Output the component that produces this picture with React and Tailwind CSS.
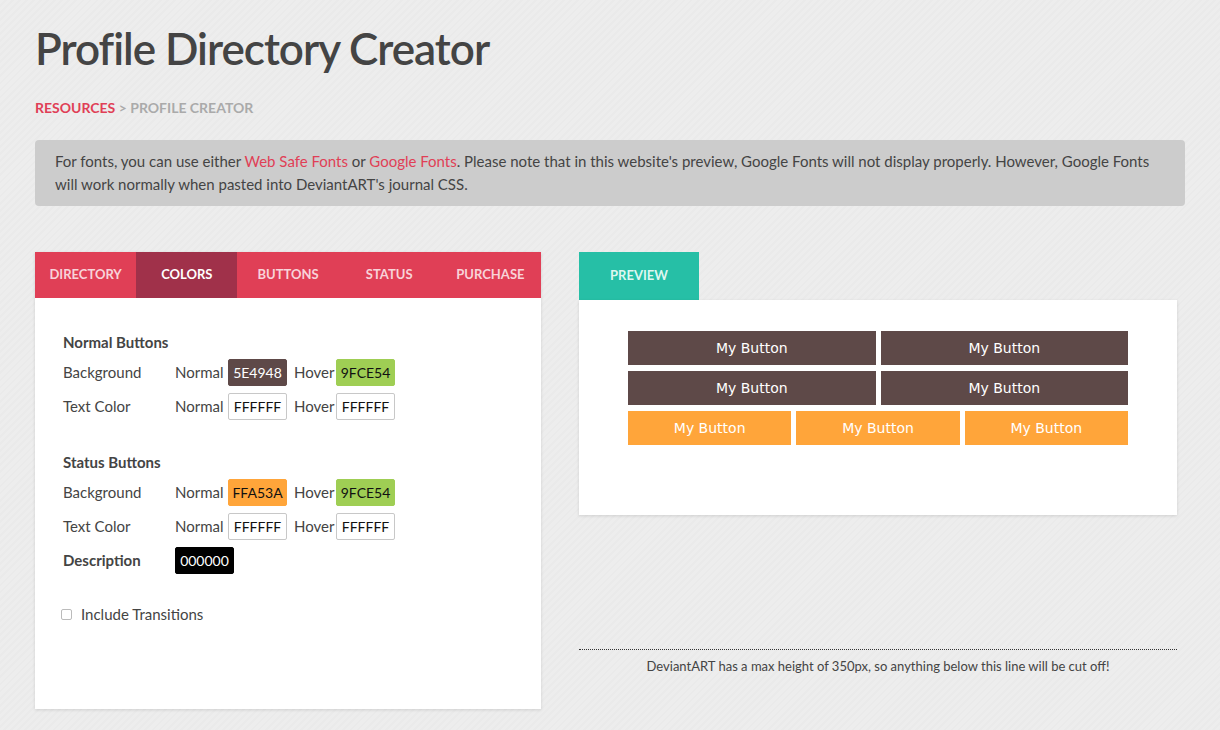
import { useState } from 'react';

const tabs = ['Directory', 'Colors', 'Buttons', 'Status', 'Purchase'];

function Swatch({ value, bg, fg, border }) {
  return (
    <span
      className={`inline-flex items-center justify-center w-[59px] h-[27px] rounded-[2px] text-[14px] border ${bg} ${fg} ${border}`}
    >
      {value}
    </span>
  );
}

function ColorRow({ label, normal, hover }) {
  return (
    <div className="flex items-center h-[34px]">
      <span className="w-[112px]">{label}</span>
      <span className="w-[53px]">Normal</span>
      <Swatch {...normal} />
      <span className="w-[49px] pl-[7px]">Hover</span>
      <Swatch {...hover} />
    </div>
  );
}

const white = { value: 'FFFFFF', bg: 'bg-white', fg: 'text-[#111]', border: 'border-[#c8c8c8]' };
const green = { value: '9FCE54', bg: 'bg-[#9fce54]', fg: 'text-[#111]', border: 'border-[#9fce54]' };

export default function App() {
  const [active] = useState('Colors');
  const [transitions, setTransitions] = useState(false);

  return (
    <div className="min-h-[730px] bg-[repeating-linear-gradient(135deg,#ededed_0px,#ededed_3px,#eaeaea_3px,#eaeaea_5px)] font-['Lato',sans-serif] text-[#444]">
      <div className="w-[1150px] ml-[35px] pt-[20px]">
        <h1 className="text-[44px] leading-[56px] font-semibold tracking-[-1px] text-[#444]">Profile Directory Creator</h1>

        <div className="mt-[23px] text-[14px] font-bold uppercase leading-[18px]">
          <a className="text-[#e03f56]">Resources</a>
          <span className="text-[#aaa]"> &gt; Profile Creator</span>
        </div>

        {/* note box */}
        <p className="mt-[23px] bg-[#cccccc] rounded-[4px] px-[20px] py-[10px] text-[15px] leading-[23px] text-[#444]">
          For fonts, you can use either <a className="text-[#e03f56]">Web Safe Fonts</a> or{' '}
          <a className="text-[#e03f56]">Google Fonts</a>. Please note that in this website's preview, Google Fonts will not
          display properly. However, Google Fonts will work normally when pasted into DeviantART's journal CSS.
        </p>

        <div className="flex gap-[38px] mt-[46px]">
          {/* settings panel */}
          <div className="w-[506px] h-[457px] bg-white shadow-[0_1px_3px_rgba(0,0,0,0.12)]">
            <div className="flex h-[46px] bg-[#e03f56]">
              {tabs.map(t => (
                <div
                  key={t}
                  className={`flex-1 flex items-center justify-center text-[13px] font-bold uppercase ${
                    t === active ? 'bg-[#a0314a] text-white' : 'text-[#f8d3d9]'
                  }`}
                >
                  {t}
                </div>
              ))}
            </div>

            <div className="pl-[28px] pt-[34px] text-[15px]">
              <div className="font-bold h-[20px] leading-[20px] mb-[3px]">Normal Buttons</div>
              <ColorRow
                label="Background"
                normal={{ value: '5E4948', bg: 'bg-[#5e4948]', fg: 'text-white', border: 'border-[#5e4948]' }}
                hover={green}
              />
              <ColorRow label="Text Color" normal={white} hover={white} />

              <div className="font-bold h-[20px] leading-[20px] mt-[29px] mb-[3px]">Status Buttons</div>
              <ColorRow
                label="Background"
                normal={{ value: 'FFA53A', bg: 'bg-[#ffa53a]', fg: 'text-[#111]', border: 'border-[#ffa53a]' }}
                hover={green}
              />
              <ColorRow label="Text Color" normal={white} hover={white} />
              <div className="flex items-center h-[34px]">
                <span className="w-[112px] font-bold">Description</span>
                <Swatch value="000000" bg="bg-black" fg="text-white" border="border-black" />
              </div>

              <label className="flex items-center mt-[27px] h-[20px] -ml-[2px] cursor-pointer">
                <span
                  onClick={() => setTransitions(v => !v)}
                  className="w-[11px] h-[11px] border border-[#bbb] rounded-[2px] bg-white mr-[9px]"
                />
                <span>Include Transitions</span>
              </label>
            </div>
          </div>

          {/* preview */}
          <div className="w-[598px]">
            <div className="w-[120px] h-[48px] bg-[#26bfa6] flex items-center justify-center text-[13px] font-bold uppercase text-[#dff7f1]">
              Preview
            </div>
            <div className="h-[215px] bg-white shadow-[0_1px_3px_rgba(0,0,0,0.12)] pt-[31px]">
              <div className="w-[500px] mx-auto flex flex-col gap-[6px] font-['DejaVu_Sans',sans-serif] text-[14px] text-white">
                <div className="grid grid-cols-2 gap-[5px]">
                  <div className="h-[34px] bg-[#5e4948] flex items-center justify-center">My Button</div>
                  <div className="h-[34px] bg-[#5e4948] flex items-center justify-center">My Button</div>
                </div>
                <div className="grid grid-cols-2 gap-[5px]">
                  <div className="h-[34px] bg-[#5e4948] flex items-center justify-center">My Button</div>
                  <div className="h-[34px] bg-[#5e4948] flex items-center justify-center">My Button</div>
                </div>
                <div className="grid grid-cols-3 gap-[5px]">
                  <div className="h-[34px] bg-[#ffa53a] flex items-center justify-center">My Button</div>
                  <div className="h-[34px] bg-[#ffa53a] flex items-center justify-center">My Button</div>
                  <div className="h-[34px] bg-[#ffa53a] flex items-center justify-center">My Button</div>
                </div>
              </div>
            </div>

            <div className="mt-[134px] border-t border-dotted border-[#333] pt-[7px] text-center text-[13px] leading-[18px] text-[#444]">
              DeviantART has a max height of 350px, so anything below this line will be cut off!
            </div>
          </div>
        </div>
      </div>
    </div>
  );
}
